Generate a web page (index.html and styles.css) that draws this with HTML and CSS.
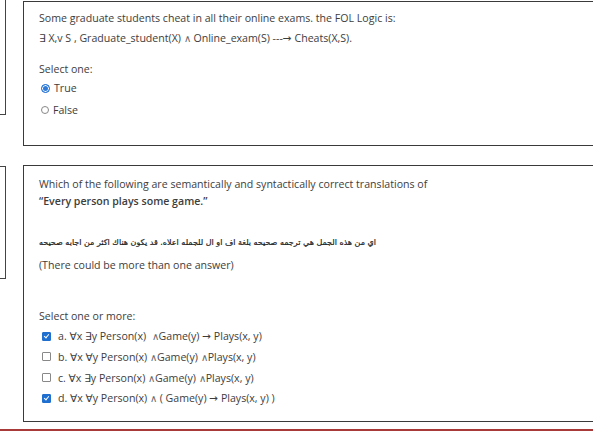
FILE: index.html
```html
<!DOCTYPE html>
<html>
<head>
<meta charset="utf-8">
<link rel="stylesheet" href="styles.css">
</head>
<body>
<div class="page">
  <div class="row row1">
    <div class="info info1"></div>
    <div class="que que1">
      <p class="line">Some graduate students cheat in all their online exams. the FOL Logic is:</p>
      <p class="line l2">&#8707; X,v S , Graduate_student(X) <span class="and">&#8743;</span> Online_exam(S) ---&#8594; Cheats(X,S).</p>
      <p class="prompt">Select one:</p>
      <div class="opt"><span class="radio on"></span><span>True</span></div>
      <div class="opt opt2"><span class="radio"></span><span>False</span></div>
    </div>
  </div>
  <div class="row row2">
    <div class="info info2"></div>
    <div class="que que2">
      <p class="line17">Which of the following are semantically and syntactically correct translations of</p>
      <p class="line17 bold">“Every person plays some game.”</p>
      <div class="arabic-wrap"><p class="arabic" dir="rtl">اي من هذه الجمل هي ترجمه صحيحه بلغة اف او ال للجمله اعلاه. قد يكون هناك اكثر من اجابه صحيحه</p></div>
      <p class="line there">(There could be more than one answer)</p>
      <p class="prompt more">Select one or more:</p>
      <div class="chk"><span class="box on"></span><span>a. &#8704;x &#8707;y Person(x) &nbsp;<span class="and">&#8743;</span>Game(y) &#8594; Plays(x, y)</span></div>
      <div class="chk"><span class="box"></span><span>b. &#8704;x &#8704;y Person(x) <span class="and">&#8743;</span>Game(y) <span class="and">&#8743;</span>Plays(x, y)</span></div>
      <div class="chk"><span class="box"></span><span>c. &#8704;x &#8707;y Person(x) <span class="and">&#8743;</span>Game(y) <span class="and">&#8743;</span>Plays(x, y)</span></div>
      <div class="chk"><span class="box on"></span><span>d. &#8704;x &#8704;y Person(x) <span class="and">&#8743;</span> ( Game(y) &#8594; Plays(x, y) )</span></div>
    </div>
  </div>
  <div class="redline"></div>
</div>
</body>
</html>
```
FILE: styles.css
```css
html, body { margin: 0; padding: 0; background: #fff; }
body { width: 593px; height: 431px; overflow: hidden; font-family: "Open Sans", "DejaVu Sans", sans-serif; font-size: 10.6px; color: #3d3d3d; }
.page { position: relative; height: 431px; }
.row { display: flex; align-items: flex-start; }
.info { width: 5px; border-right: 1px solid #444; border-bottom: 1px solid #444; flex: none; }
.info1 { height: 114px; }
.info2 { height: 111px; border-top: 1px solid #444; margin-top: 1px; }
.que { margin-left: 17px; flex: 1; border: 1px solid #3a3a3a; border-right: none; padding-left: 15px; box-sizing: border-box; }
.que1 { height: 145px; margin-top: 1px; padding-top: 6px; }
.row2 { margin-top: 19px; }
.que2 { height: 257px; padding-top: 9.5px; }
p { margin: 0; }
.line { line-height: 20px; }
.l2 { margin-top: 0; }
.line17 { line-height: 17px; }
.bold { font-weight: 600; }
.prompt { margin-top: 12px; line-height: 18px; }
.more { margin-top: 31px; line-height: 20px; }
.there { margin-top: 2px; }
.arabic-wrap { display: flex; margin-top: 23.5px; }
.arabic { line-height: 20px; white-space: nowrap; font-family: "DejaVu Sans", sans-serif; font-size: 8px; color: #222; -webkit-text-stroke: 0.2px #222; }
.opt { display: flex; align-items: center; height: 18px; padding-left: 2px; }
.opt:first-of-type { margin-top: 1px; }
.opt2 { margin-top: 4px; }
.chk { display: flex; align-items: center; height: 20.67px; padding-left: 3px; }
.and { font-size: 10px; color: #666; font-weight: 300; }
.radio { width: 8px; height: 8px; border: 1px solid #888; border-radius: 50%; margin-right: 4px; box-sizing: border-box; }
.radio.on { width: 9px; height: 9px; border: 1px solid #1d6fd6; background: #2f7ad9; box-shadow: inset 0 0 0 1px #fff; }
.box { width: 9px; height: 9px; border: 1px solid #888; border-radius: 1px; margin-right: 7px; box-sizing: border-box; position: relative; }
.box.on { background: #1e6fd0; border-color: #1e6fd0; }
.box.on::after { content: ""; position: absolute; left: 2px; top: 0px; width: 2px; height: 4px; border: solid #fff; border-width: 0 1.5px 1.5px 0; transform: rotate(40deg); }
.redline { position: absolute; left: 0; right: 0; top: 429px; height: 2px; background: #a93a3a; border-bottom: 1px solid #f3c9c9; }
```
